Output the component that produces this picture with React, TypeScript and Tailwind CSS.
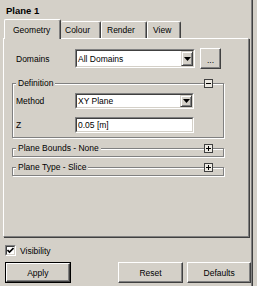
import React from "react";

function Triangle() {
  return (
    <svg width="7" height="4" viewBox="0 0 7 4">
      <path d="M0 0h7L3.5 4z" fill="#000" />
    </svg>
  );
}

function DropBtn() {
  return (
    <div className="w-[12px] h-full bg-[#d4d0c8] border border-t-[#d4d0c8] border-l-[#d4d0c8] border-r-[#404040] border-b-[#404040] shadow-[inset_1px_1px_0_#fff,inset_-1px_-1px_0_#808080] flex items-center justify-center">
      <Triangle />
    </div>
  );
}

function Field({ className, text, combo }: { className: string; text: string; combo?: boolean }) {
  return (
    <div className={`${className} border border-t-[#808080] border-l-[#808080] border-r-white border-b-white`}>
      <div className="h-full border border-t-[#404040] border-l-[#404040] border-r-[#d4d0c8] border-b-[#d4d0c8] bg-white flex items-center">
        <span className="flex-1 pl-[1px] leading-[12px] whitespace-nowrap">{text}</span>
        {combo ? <DropBtn /> : null}
      </div>
    </div>
  );
}

function Raised({ className, children }: { className: string; children: React.ReactNode }) {
  return (
    <div className={`${className} bg-[#d4d0c8] border border-t-white border-l-white border-r-[#404040] border-b-[#404040] shadow-[inset_-1px_-1px_0_#808080] flex items-center justify-center`}>
      {children}
    </div>
  );
}

function Toggle({ open }: { open: boolean }) {
  return (
    <div className="absolute right-[10px] top-[-5px] w-[9px] h-[9px] border border-[#404040] bg-[#ece9e2] flex items-center justify-center">
      <svg width="5" height="5" viewBox="0 0 5 5">
        <path d="M0 2h5v1H0z" fill="#000" />
        {open ? null : <path d="M2 0h1v5H2z" fill="#000" />}
      </svg>
    </div>
  );
}

function Group({
  title,
  open,
  className,
  children,
}: {
  title: string;
  open: boolean;
  className: string;
  children?: React.ReactNode;
}) {
  return (
    <div
      className={`relative ml-[8px] w-[212px] border border-[#808080] shadow-[inset_1px_1px_0_#fff,1px_1px_0_#fff] ${className}`}
    >
      <span className="absolute left-[3px] top-[-7px] px-[2px] leading-[12px] bg-[#d4d0c8] whitespace-nowrap">
        {title}
      </span>
      <Toggle open={open} />
      {children}
    </div>
  );
}

export default function App() {
  return (
    <div className="w-[257px] h-[286px] bg-[#d4d0c8] text-black text-[8.5px] font-['Liberation_Sans',Arial,sans-serif] flex overflow-hidden">
      <div className="w-[251px] flex flex-col">
        {/* Title */}
        <div className="h-[19px] pt-[5px] pl-[6px] font-bold text-[9.5px] leading-[12px]">Plane 1</div>

        {/* Tabs */}
        <div className="relative z-10 h-[19px] ml-[4px] flex items-end">
          <div className="-mb-px h-[20px] w-[57px] pl-[8px] bg-[#d4d0c8] border-t border-l border-r border-t-white border-l-white border-r-[#404040] rounded-t-[2px] shadow-[inset_-1px_0_0_#808080] flex items-center leading-[12px]">
            Geometry
          </div>
          <div className="h-[17px] w-[40px] pl-[4px] border-t border-r border-t-white border-r-[#404040] rounded-t-[2px] shadow-[inset_-1px_0_0_#808080] flex items-center leading-[12px]">
            Colour
          </div>
          <div className="h-[17px] w-[46px] pl-[5px] border-t border-l border-r border-t-white border-l-white border-r-[#404040] rounded-t-[2px] shadow-[inset_-1px_0_0_#808080] flex items-center leading-[12px]">
            Render
          </div>
          <div className="h-[17px] w-[34px] pl-[5px] border-t border-l border-r border-t-white border-l-white border-r-[#404040] rounded-t-[2px] shadow-[inset_-1px_0_0_#808080] flex items-center leading-[12px]">
            View
          </div>
        </div>

        {/* Panel */}
        <div className="ml-[3px] w-[246px] h-[199px] border border-t-white border-l-white border-r-[#808080] border-b-[#808080] shadow-[1px_1px_0_#404040] pt-[9px] flex flex-col">
          <div className="flex items-center h-[21px]">
            <span className="w-[71px] pl-[12px] leading-[12px]">Domains</span>
            <Field className="w-[120px] h-[19px]" text="All Domains" combo />
            <Raised className="ml-[5px] w-[21px] h-[21px]">
              <span className="leading-[10px] pt-[3px]">...</span>
            </Raised>
          </div>

          <Group title="Definition" open className="mt-[14px] pt-[9px] pb-[4px]">
            <div className="flex items-center h-[16px]">
              <span className="w-[62px] pl-[3px] leading-[12px]">Method</span>
              <Field className="w-[119px] h-[16px]" text="XY Plane" combo />
            </div>
            <div className="flex items-center h-[16px] mt-[8px]">
              <span className="w-[62px] pl-[3px] leading-[12px]">Z</span>
              <Field className="w-[119px] h-[16px]" text="0.05 [m]" />
            </div>
          </Group>

          <Group title="Plane Bounds - None" open={false} className="mt-[10px] h-[9px]" />
          <Group title="Plane Type - Slice" open={false} className="mt-[10px] h-[9px]" />
        </div>

        {/* Visibility */}
        <div className="mt-[8px] ml-[5px] flex items-center h-[11px]">
          <div className="w-[11px] h-[11px] border border-t-[#808080] border-l-[#808080] border-r-white border-b-white">
            <div className="w-full h-full border border-t-[#404040] border-l-[#404040] border-r-[#d4d0c8] border-b-[#d4d0c8] bg-white flex items-center justify-center">
              <svg width="7" height="7" viewBox="0 0 7 7">
                <path d="M0.5 3 L2.5 5 L6.5 1" fill="none" stroke="#000" strokeWidth="1.6" />
              </svg>
            </div>
          </div>
          <span className="ml-[4px] leading-[12px]">Visibility</span>
        </div>

        {/* Buttons */}
        <div className="mt-[6px] flex h-[21px]">
          <div className="ml-[5px] w-[66px] h-[21px] border border-black">
            <Raised className="w-full h-full">
              <span className="leading-[12px]">Apply</span>
            </Raised>
          </div>
          <Raised className="ml-[47px] w-[66px] h-[21px]">
            <span className="leading-[12px]">Reset</span>
          </Raised>
          <Raised className="ml-[4px] w-[64px] h-[21px]">
            <span className="leading-[12px]">Defaults</span>
          </Raised>
        </div>
      </div>
      <div className="w-[2px] h-full border-l border-r border-l-[#808080] border-r-[#404040]" />
    </div>
  );
}
